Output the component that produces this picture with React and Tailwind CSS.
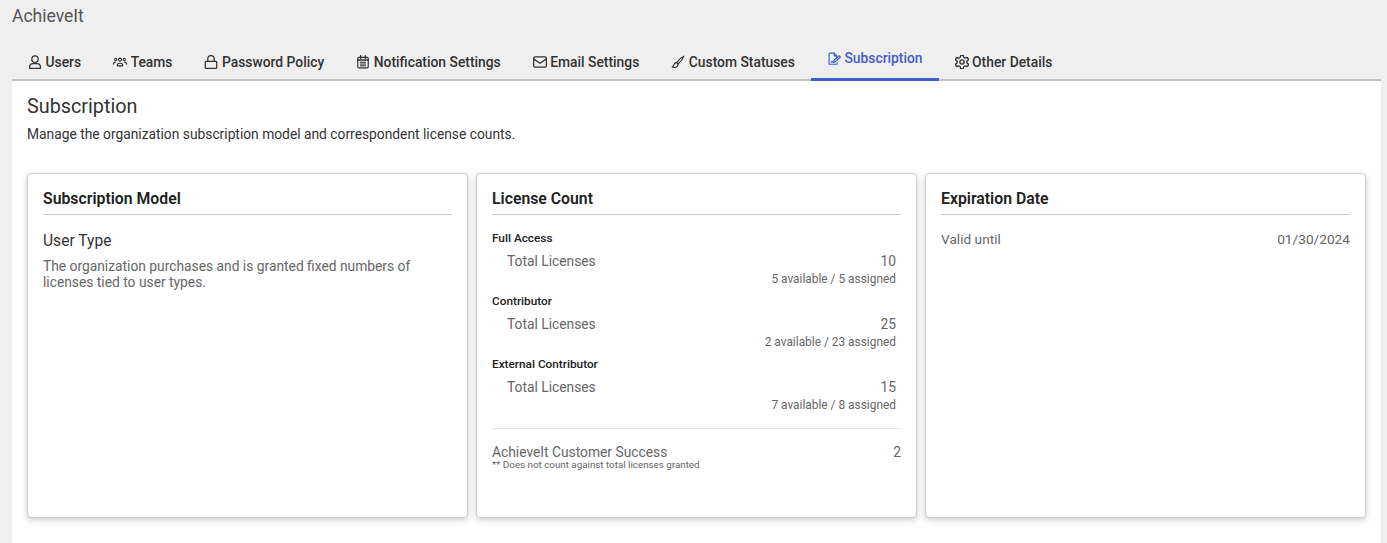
import React from "react";

function Svg({ className, viewBox = "0 0 24 24", children }) {
  return (
    <svg viewBox={viewBox} fill="none" stroke="currentColor" strokeWidth="2" strokeLinecap="round" strokeLinejoin="round" className={className}>
      {children}
    </svg>
  );
}

function UserIcon({ className }) {
  return (
    <Svg className={className} viewBox="1 1 22 22">
      <circle cx="12" cy="7.500" r="5" />
      <path d="M3.500 22v-2.500c0-3 2.500-5 5.500-5h6c3 0 5.500 2 5.500 5V22z" />
    </Svg>
  );
}

function TeamsIcon({ className }) {
  return (
    <Svg className={className}>
      <circle cx="12" cy="8" r="2.600" />
      <path d="M7.500 18.500v-1.200c0-1.800 1.600-3.100 4.500-3.100s4.500 1.300 4.500 3.100v1.200z" />
      <circle cx="4.700" cy="7.500" r="1.900" />
      <circle cx="19.300" cy="7.500" r="1.900" />
      <path d="M1 15.500v-1c0-1.300 1.200-2.300 3.400-2.300M23 15.500v-1c0-1.300-1.200-2.300-3.400-2.300" />
    </Svg>
  );
}

function LockIcon({ className }) {
  return (
    <Svg className={className} viewBox="1 1 22 22">
      <rect x="3" y="11" width="18" height="11" rx="1.500" />
      <path d="M7 11V7a5 5 0 0 1 10 0v4" />
    </Svg>
  );
}

function CalendarIcon({ className }) {
  return (
    <Svg className={className}>
      <path d="M8 1.500v4M16 1.500v4" strokeWidth="2.600" />
      <rect x="3" y="4" width="18" height="18" rx="2" />
      <path d="M3 8.500h18" strokeWidth="2.600" />
      <path d="M7.500 12.500h9M7.500 15.500h9M7.500 18.500h9" strokeWidth="1.700" />
    </Svg>
  );
}

function MailIcon({ className }) {
  return (
    <Svg className={className} viewBox="1 1 22 22">
      <rect x="2" y="4" width="20" height="16" rx="2" />
      <path d="M2.500 7.500L12 14l9.500-6.500" />
    </Svg>
  );
}

function BrushIcon({ className }) {
  return (
    <Svg className={className}>
      <path d="M22 2c-4 1.600-9.500 7-12.500 11l2.500 2.500C15.500 12.500 20.500 6.500 22 2z" />
      <path d="M9.500 13C7 13 5.500 14.500 5 16.500 4.600 18.300 3.800 19.500 2 20.500c3 1.300 7 .8 8.800-1.500 1.200-1.400 1.400-2.400 1.200-3.500" />
    </Svg>
  );
}

function SubscriptionIcon({ className }) {
  return (
    <Svg className={className}>
      <path d="M16.500 11V6.500L12.500 2H4.500a1 1 0 0 0-1 1v17a1 1 0 0 0 1 1h12a1 1 0 0 0 1-1v-1.500" />
      <path d="M12.500 2v4.500h4" />
      <path d="M23 8.500l-8.500 8-3.500 1.500 1-3.800 8.500-7.700z" />
      <path d="M7 17.500c1-1.500 2-1.500 3 0" />
    </Svg>
  );
}

function GearIcon({ className }) {
  return (
    <Svg className={className} viewBox="2 2 20 20">
      <path d="M12.220 2h-.44a2 2 0 0 0-2 2v.18a2 2 0 0 1-1 1.730l-.43.250a2 2 0 0 1-2 0l-.15-.08a2 2 0 0 0-2.730.730l-.22.380a2 2 0 0 0 .730 2.730l.15.100a2 2 0 0 1 1 1.720v.510a2 2 0 0 1-1 1.740l-.15.090a2 2 0 0 0-.730 2.730l.22.380a2 2 0 0 0 2.730.730l.15-.08a2 2 0 0 1 2 0l.43.250a2 2 0 0 1 1 1.730V20a2 2 0 0 0 2 2h.44a2 2 0 0 0 2-2v-.18a2 2 0 0 1 1-1.730l.43-.250a2 2 0 0 1 2 0l.15.080a2 2 0 0 0 2.730-.730l.22-.390a2 2 0 0 0-.730-2.730l-.15-.080a2 2 0 0 1-1-1.740v-.500a2 2 0 0 1 1-1.740l.15-.090a2 2 0 0 0 .730-2.730l-.22-.380a2 2 0 0 0-2.730-.730l-.15.080a2 2 0 0 1-2 0l-.43-.250a2 2 0 0 1-1-1.730V4a2 2 0 0 0-2-2z" />
      <circle cx="12" cy="12" r="3" />
    </Svg>
  );
}

const tabs = [
  { label: "Users", Icon: UserIcon },
  { label: "Teams", Icon: TeamsIcon },
  { label: "Password Policy", Icon: LockIcon },
  { label: "Notification Settings", Icon: CalendarIcon },
  { label: "Email Settings", Icon: MailIcon },
  { label: "Custom Statuses", Icon: BrushIcon },
  { label: "Subscription", Icon: SubscriptionIcon, active: true },
  { label: "Other Details", Icon: GearIcon },
];

function Card({ title, children }) {
  return (
    <div className="flex h-[345px] flex-col rounded border border-[#cfcfcf] bg-white px-[15px] pt-[14px] shadow-[0_2px_6px_rgba(0,0,0,0.2)]">
      <div className="border-b border-[#cccccc] pb-[5px] text-[15.8px] leading-[21px] font-semibold text-[#212121]">{title}</div>
      {children}
    </div>
  );
}

function License({ name, total, detail }) {
  return (
    <div className="h-[63px]">
      <div className="text-[11.8px] leading-[16px] font-medium text-[#212121]">{name}</div>
      <div className="mt-[7px] flex justify-between pr-[5px] pl-[15px] text-[13.8px] leading-[16px] text-[#666666]">
        <span>Total Licenses</span>
        <span>{total}</span>
      </div>
      <div className="mt-[3px] pr-[5px] text-right text-[11.9px] leading-[14px] text-[#666666]">{detail}</div>
    </div>
  );
}

export default function App() {
  return (
    <div className="h-[543px] overflow-hidden bg-[#efefef] pr-[6px] pl-[12px] font-['Roboto',sans-serif]">
      <div className="pt-[5px] text-[17.5px] leading-[22px] text-[#555555]">AchieveIt</div>
      <div className="mt-[18px] flex h-[36px] items-stretch border-b-2 border-[#c2c2c2]">
        {tabs.map(({ label, Icon, active }) => (
          <div
            key={label}
            className={
              active
                ? "-mb-[2px] flex items-center gap-[3.5px] border-b-[3px] border-[#3f5fc9] px-4 pb-[6px] text-[13.85px] font-medium text-[#3f5fc9]"
                : "flex items-center gap-[3.5px] px-4 text-[13.85px] font-medium text-[#333333]"
            }
          >
            <Icon className="h-[14px] w-[14px] shrink-0" />
            <span>{label}</span>
          </div>
        ))}
      </div>
      <div className="h-[470px] bg-white px-[15px]">
        <h1 className="pt-[13px] text-[19.8px] leading-[26px] font-normal text-[#333333]">Subscription</h1>
        <p className="mt-[6px] text-[13.8px] leading-[16px] text-[#333333]">Manage the organization subscription model and correspondent license counts.</p>
        <div className="mt-[31px] grid grid-cols-3 gap-[8px]">
          <Card title="Subscription Model">
            <div className="mt-[16px] text-[15.6px] leading-[20px] text-[#333333]">User Type</div>
            <p className="mt-[7px] text-[13.8px] leading-[16px] text-[#666666]">The organization purchases and is granted fixed numbers of licenses tied to user types.</p>
          </Card>
          <Card title="License Count">
            <div className="pt-[15px]">
              <License name="Full Access" total="10" detail="5 available / 5 assigned" />
              <License name="Contributor" total="25" detail="2 available / 23 assigned" />
              <License name="External Contributor" total="15" detail="7 available / 8 assigned" />
            </div>
            <div className="mt-[9px] border-t border-[#e4e4e4] pt-[15px]">
              <div className="flex justify-between text-[13.8px] leading-[16px] text-[#666666]">
                <span>AchieveIt Customer Success</span>
                <span>2</span>
              </div>
              <div className="text-[9.8px] leading-[10px] text-[#666666]">** Does not count against total licenses granted</div>
            </div>
          </Card>
          <Card title="Expiration Date">
            <div className="mt-[16px] flex justify-between text-[13.7px] leading-[16px] text-[#666666]">
              <span>Valid until</span>
              <span>01/30/2024</span>
            </div>
          </Card>
        </div>
      </div>
    </div>
  );
}
